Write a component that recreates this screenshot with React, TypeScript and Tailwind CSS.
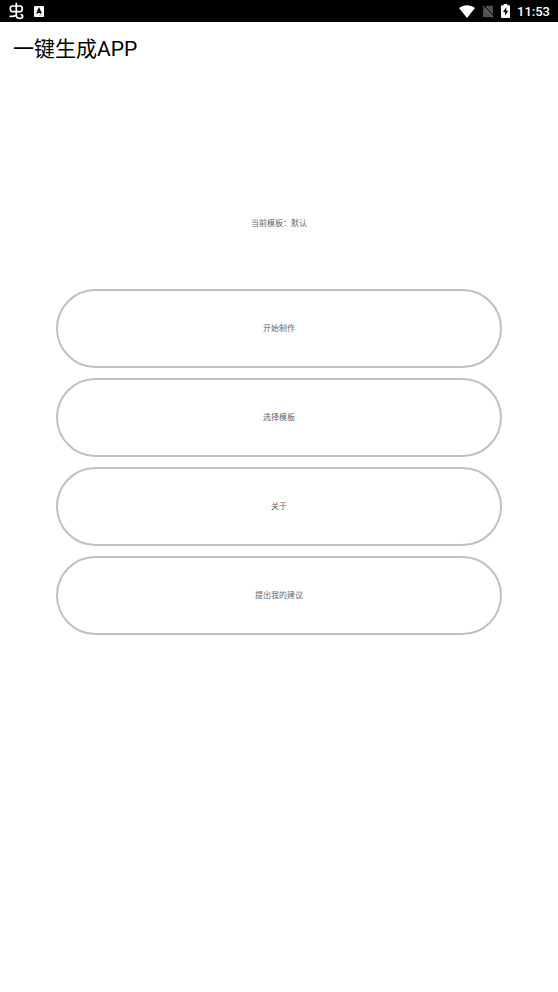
import React from 'react';

interface MenuItem {
  id: string;
  label: string;
}

const MENU_ITEMS: MenuItem[] = [
  { id: 'create', label: '开始制作' },
  { id: 'template', label: '选择模板' },
  { id: 'about', label: '关于' },
  { id: 'feedback', label: '提出我的建议' },
];

const BugIcon: React.FC = () => (
  <svg viewBox="0 0 16 18" className="h-[18px] w-4" fill="none" stroke="currentColor" strokeWidth="1.7" strokeLinecap="round" strokeLinejoin="round">
    <path d="M8.300 1.400V13.500" />
    <path d="M4.200 4h8.200a1.800 1.800 0 0 1 1.800 1.800v2a1.800 1.800 0 0 1-1.800 1.800H4.200a1.800 1.800 0 0 1-1.800-1.800v-2A1.800 1.800 0 0 1 4.200 4z" />
    <path d="M2.200 14.300c2 .3 4.300-.1 6.100-1 .2 2 1.200 3 3 3 1.900 0 3.400-1 3.400-2.400 0-.7-.6-1.200-1.500-1.300" />
  </svg>
);

const LetterBadge: React.FC = () => (
  <svg viewBox="0 0 10 11" className="h-[11px] w-2.5">
    <rect width="10" height="11" rx="1" fill="#fff" />
    <path d="M2.800 7.600 5 2.800l2.200 4.800M3.700 6.200h2.600" fill="none" stroke="#000" strokeWidth="1.500" />
    <path d="M5 9.400h3" stroke="#888" strokeWidth=".6" />
  </svg>
);

const WifiIcon: React.FC = () => (
  <svg viewBox="0 0 16 13" className="h-[13px] w-4" fill="currentColor">
    <path d="M8 13 0 3.100C2.200 1.200 5 .2 8 .2s5.800 1 8 2.900z" />
  </svg>
);

const NoSimIcon: React.FC = () => (
  <svg viewBox="0 0 12 13" className="h-[13px] w-3">
    <path d="M4.500.8H11v11.400H1V4.300z" fill="#505050" />
    <path d="M1.300 0l11 12" stroke="#000" strokeWidth="1" />
    <path d="M.4.700l11 12" stroke="#757575" strokeWidth="1" />
  </svg>
);

const BatteryIcon: React.FC = () => (
  <svg viewBox="0 0 9 14" className="h-3.5 w-[9px]">
    <path d="M2.700 0h3.600v1.300H8.200c.5 0 .8.3.8.8v11c0 .5-.3.900-.8.900H.8c-.5 0-.8-.4-.8-.9v-11c0-.5.3-.8.8-.8h1.900z" fill="#fff" />
    <path d="M5.300 3.300 2 8h2.100v3.700l3-4.900H5.300z" fill="#000" />
  </svg>
);

const StatusBar: React.FC = () => (
  <div className="flex h-[22px] items-center justify-between bg-black px-2 text-white">
    <div className="flex items-center gap-2.5">
      <BugIcon />
      <LetterBadge />
    </div>
    <div className="flex items-center gap-[7px]">
      <div className="flex items-center gap-[7px]">
        <WifiIcon />
        <NoSimIcon />
        <BatteryIcon />
      </div>
      <span className="pt-px font-['Roboto',sans-serif] text-[13px] font-medium leading-[21px]">11:53</span>
    </div>
  </div>
);

const App: React.FC = () => {
  return (
    <div className="min-h-screen bg-white font-['Roboto','Noto_Sans_CJK_SC',sans-serif]">
      <StatusBar />

      <header className="px-[13px] py-3">
        <h1 className="text-[21px] leading-[30px] text-black">一键生成APP</h1>
      </header>

      <main className="flex flex-col items-center px-14 pt-[142px]">
        <p className="text-[8px] leading-3 text-[#666]">当前模板：默认</p>

        <nav className="mt-[59px] flex w-full flex-col gap-2.5">
          {MENU_ITEMS.map((item) => (
            <button
              key={item.id}
              type="button"
              className="h-[79px] w-full cursor-pointer rounded-[40px] border-2 border-[#c0c0c0] bg-white text-[8px] leading-3 text-[#666]"
            >
              {item.label}
            </button>
          ))}
        </nav>
      </main>
    </div>
  );
};

export default App;
